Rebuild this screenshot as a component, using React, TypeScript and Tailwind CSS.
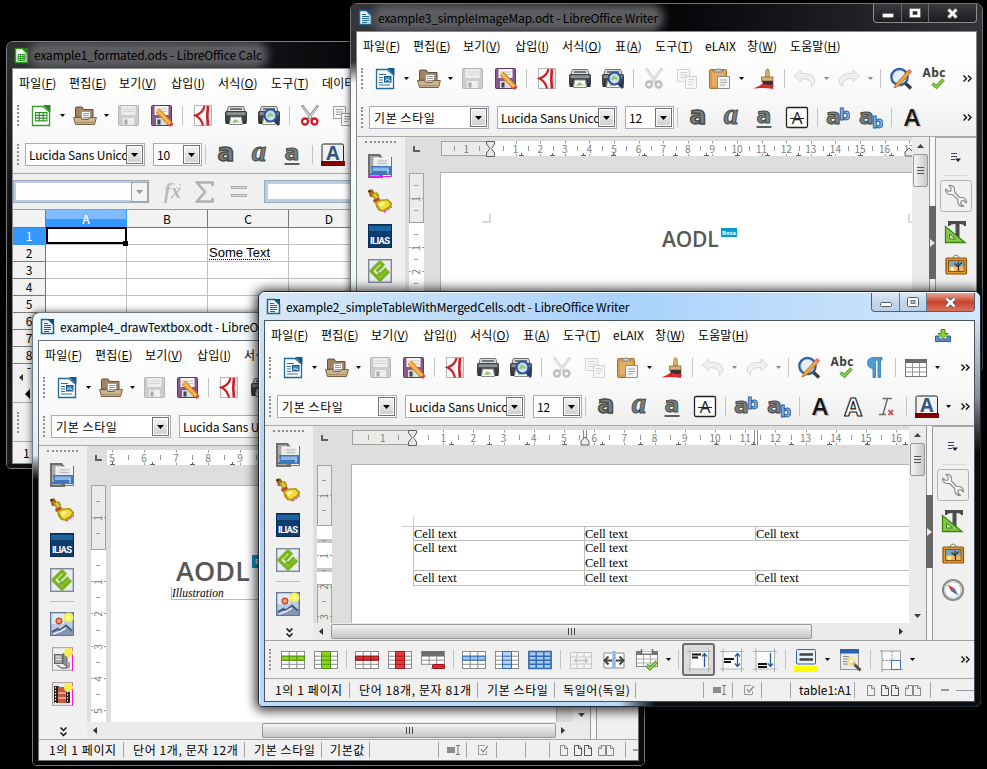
import React from "react";

type Kids = { children?: React.ReactNode };

/* ---------- generic icon shell ---------- */
const I = ({ children, s = 24 }: Kids & { s?: number }) => (
  <svg width={s} height={s} viewBox="0 0 24 24" className="block shrink-0">
    {children}
  </svg>
);

/* ---------- icons: standard toolbar ---------- */
const DocW = () => (
  <I>
    <path d="M3.500 2.500H14L20.500 8V21.500H3.500Z" fill="#fff" stroke="#1c6b9c" strokeWidth="1.3" />
    <path d="M14 1H21.500V8.500Z" fill="#15598a" />
    <path d="M6 7.500H13M6 10.500H10M6 13H10M6 15.500H10M6 18H17" stroke="#2a6f9e" />
    <rect x="11.500" y="9.500" width="6.500" height="5.500" fill="#3b8cc4" stroke="#15598a" />
    <path d="M12 14L14 12L17.500 14" stroke="#cfe6f5" fill="none" />
  </I>
);
const DocC = () => (
  <I>
    <path d="M3.500 2.500H14L20.500 8V21.500H3.500Z" fill="#fff" stroke="#3a9a2e" strokeWidth="1.3" />
    <path d="M14 1H21.500V8.500Z" fill="#1f8a1a" />
    <rect x="6" y="8" width="12.500" height="9.500" fill="#2f9427" />
    <path d="M7 10H17.500M7 12.700H17.500M7 15.400H17.500" stroke="#fff" strokeWidth="1.500" strokeDasharray="2.700 1.200" />
  </I>
);
const Folder = () => (
  <I>
    <path d="M2.500 13V4Q2.500 3 3.500 3H9L11 5.500H20V14Z" fill="#a08560" stroke="#6b4f33" />
    <path d="M8.500 7.500H17.500V15H8.500Z" fill="#fdfdfd" stroke="#999" />
    <path d="M10 9.500H16M10 11.500H16M10 13.500H16" stroke="#999" />
    <path d="M.600 13.500H7.500L9 15.500H15L16.500 13.500H23.400L21.500 20.500H2.500Z" fill="#c8b393" stroke="#7b6040" />
    <path d="M3 18.500H21" stroke="#a68c68" />
  </I>
);
const Floppy = ({ on = false }: { on?: boolean }) => (
  <>
    <rect x="1.500" y="1.500" width="20" height="20" rx="1" fill={on ? "#87598f" : "#cdcdcd"} stroke={on ? "#5e3a66" : "#b5b5b5"} />
    <rect x="4.500" y="2" width="14" height="9" fill={on ? "#f4f4f4" : "#ededed"} />
    <path d="M6 5H17M6 7.500H17" stroke={on ? "#c5c5c5" : "#d5d5d5"} />
    <rect x="6" y="14" width="11" height="7" fill={on ? "#ddd" : "#eee"} />
    <rect x="7.500" y="15.500" width="3" height="5" fill={on ? "#444" : "#aaa"} />
  </>
);
const Save = () => <I><Floppy /></I>;
const Pencil = () => (
  <>
    <path d="M7 6L10 5.500L22 18.500L19 21.500L6.500 9Z" fill="#f6a63c" stroke="#b96a15" strokeWidth=".8" />
    <path d="M8.500 7.500L20.500 20" stroke="#ffd38a" />
    <path d="M19 21.500L22 18.500L23.500 20L21 23Z" fill="#d93c48" />
    <path d="M5.500 4.500L9 5.500L6.500 8.500Z" fill="#f3d9a8" />
  </>
);
const SaveAs = () => <I><Floppy on /><Pencil /></I>;
const Pdf = () => (
  <I>
    <rect x="3.500" y="1.500" width="17" height="20" fill="#fafafa" stroke="#b4b4b4" />
    <rect x="15" y="2" width="5" height="19" fill="#e4e4e4" />
    <path d="M13.500 2Q12 9 4.500 11.500Q10 14 12 21.500" fill="none" stroke="#c9202a" strokeWidth="2.200" />
    <path d="M17 2Q15.500 12 17 21.500" fill="none" stroke="#c9202a" strokeWidth="2.600" />
  </I>
);
const PrinterG = () => (
  <>
    <path d="M4 3.500Q4 2.500 5 2.500H19Q20 2.500 20 3.500L21 8H3Z" fill="#dcdcdc" stroke="#6e6e6e" />
    <path d="M6 5H18" stroke="#555" strokeWidth="1.600" />
    <rect x="1" y="7" width="22" height="11" rx="1.500" fill="#3c4043" />
    <rect x="2.500" y="8.200" width="19" height="3" fill="#8b9093" />
    <rect x="1.500" y="17" width="4" height="3" fill="#303335" />
    <rect x="18.500" y="17" width="4" height="3" fill="#303335" />
    <path d="M6.500 13H17.500L18.500 20.500H5.500Z" fill="#fff" stroke="#888" />
    <path d="M8 19L11 15L16 18Z" fill="#8ccb5e" />
  </>
);
const Printer = () => <I><PrinterG /></I>;
const Preview = () => (
  <I>
    <PrinterG />
    <circle cx="13.500" cy="11.500" r="6" fill="#cfe0ef" fillOpacity=".92" stroke="#2c56a0" strokeWidth="2.200" />
    <path d="M11 13L13 10L16 12" stroke="#8ccb5e" strokeWidth="2" fill="none" />
    <path d="M18 16.500L22 21" stroke="#24386b" strokeWidth="3" />
  </I>
);
const Cut = ({ on = false }: { on?: boolean }) => (
  <I>
    <path d="M4 1.500L14 15M20 1.500L10 15" stroke={on ? "#8f8f8f" : "#d0d0d0"} strokeWidth="2.800" />
    <path d="M4.500 2.500L13 14M19.500 2.500L11 14" stroke={on ? "#efefef" : "#f4f4f4"} />
    <circle cx="7" cy="17.500" r="3" fill="none" stroke={on ? "#d01f2b" : "#bdbdbd"} strokeWidth="2.300" />
    <circle cx="16.500" cy="17.500" r="3" fill="none" stroke={on ? "#d01f2b" : "#bdbdbd"} strokeWidth="2.300" />
  </I>
);
const Copy = ({ on = false }: { on?: boolean }) => (
  <I>
    <g fill="#f7f7f7" stroke={on ? "#999" : "#d3d3d3"}>
      <path d="M2.500 2.500H14.500V14.500H2.500Z" />
      <path d="M5 5.500H12M5 8H12M5 10.500H10" />
      <path d="M10.500 9.500H21.500V21.500H10.500Z" />
      <path d="M13 12.500H19M13 15H19M13 17.500H17" />
    </g>
  </I>
);
const Paste = () => (
  <I>
    <rect x="1.500" y="2.500" width="17" height="19" rx="1" fill="#d99a4b" stroke="#a9702b" />
    <rect x="4" y="5" width="12" height="14" fill="#e4ad66" />
    <path d="M5.500 5V3H8Q10 .500 12 3H14.500V5Z" fill="#ccd0cc" stroke="#80867f" />
    <path d="M9.500 9.500H21.500V21.500H9.500Z" fill="#f6f6f6" stroke="#8d8d8d" />
    <path d="M12 13H19M12 15.500H19M12 18H17" stroke="#a4a4a4" />
  </I>
);
const Brush = () => (
  <I>
    <path d="M1 21.500Q8 19 11 16L21 19L21 22Q12 20.500 1 21.500Z" fill="#e0232d" />
    <path d="M13.500 10L14 3Q15.500 .500 17 3L17.500 10Z" fill="#e3b36c" stroke="#a97430" strokeWidth=".8" />
    <rect x="9.500" y="10" width="11.500" height="4" fill="#d8b27a" stroke="#84653c" strokeWidth=".8" />
    <path d="M10 14H21L21.500 20Q16 21 11 17Z" fill="#3c2f2c" />
    <path d="M12 18Q16 20 21 18.500" stroke="#d8343a" strokeWidth="2" fill="none" />
  </I>
);
const Undo = ({ flip = false }: { flip?: boolean }) => (
  <I>
    <g transform={flip ? "translate(24 0) scale(-1 1)" : undefined}>
      <path d="M1.500 9L8 3V6.500Q20 5.500 22 13Q22.500 17 18.500 19.500Q20 11.500 8 11.500V15Z" fill="#f0f0f0" stroke="#d6d6d6" />
    </g>
  </I>
);
const Find = () => (
  <I>
    <path d="M15 15L22 21.500" stroke="#3c3c3c" strokeWidth="3.500" />
    <circle cx="10.500" cy="10" r="8" fill="#e7eff8" stroke="#2f57a0" strokeWidth="2.600" />
    <circle cx="10.500" cy="10" r="7" fill="none" stroke="#8db2df" strokeWidth=".8" />
    <path d="M5 21L7 17L19 3.500L21.500 6L9.500 19Z" fill="#f5a43a" stroke="#a9601b" strokeWidth=".8" />
    <path d="M18.500 4L20 2L23 4.500L21.500 6.500Z" fill="#ef6b73" />
  </I>
);
const Abc = () => (
  <I>
    <text x="12" y="9.500" textAnchor="middle" textLength="23" fontSize="12" fontWeight="700" fontFamily="Open Sans" fill="#3a3a3a">Abc</text>
    <path d="M10.500 16.500L14.500 20L21.500 12.500" fill="none" stroke="#4f9d22" strokeWidth="3.400" />
    <path d="M10.500 16.500L14.500 20L21.500 12.500" fill="none" stroke="#93d858" strokeWidth="1.400" />
  </I>
);
const Pilcrow = () => (
  <I>
    <path d="M19 1.500H10Q4.500 2 4.500 7Q4.500 12 10 12.500V21.500H12.500V4H15V21.500H17.500V4H19Z" fill="#4c9ed8" stroke="#2b79b5" strokeWidth=".8" />
  </I>
);
const TableI = () => (
  <I>
    <rect x="1.500" y="3.500" width="21" height="17" fill="#fff" stroke="#777" />
    <rect x="1" y="3" width="22" height="4" fill="#6c6c6c" />
    <path d="M1.500 11.500H22M1.500 16H22M8.500 7V20M15.500 7V20" stroke="#999" />
  </I>
);

/* ---------- icons: formatting ---------- */
const chunky = { fontFamily: "DejaVu Sans", fontWeight: 700, fill: "#7c7f7e", stroke: "#474b4a", strokeWidth: 1 };
const Bold = () => <I><text x="12" y="18" textAnchor="middle" fontSize="25" {...chunky} strokeWidth="1.500">a</text></I>;
const Ital = () => <I><text x="12" y="18" textAnchor="middle" fontSize="29" {...chunky} fontStyle="italic" fontFamily="Liberation Serif">a</text></I>;
const Und = () => (
  <I>
    <text x="12" y="17" textAnchor="middle" fontSize="22" {...chunky}>a</text>
    <path d="M4.500 21H19.500" stroke="#5b5f5e" strokeWidth="2" />
  </I>
);
const Strike = () => (
  <I>
    <rect x="1.500" y="1.500" width="21" height="20" rx="1.500" fill="#fff" stroke="#222" strokeWidth="1.300" />
    <text x="12" y="17.500" textAnchor="middle" fontSize="17" fontFamily="Open Sans" fill="#222">A</text>
    <path d="M5 12.500H19" stroke="#222" />
  </I>
);
const Sup = ({ sub = false }: { sub?: boolean }) => (
  <I>
    <text x="7.500" y="18" textAnchor="middle" fontSize="22" {...chunky}>a</text>
    <text x="18.800" y={sub ? 22 : 14} textAnchor="middle" fontSize="16" fontWeight="700" fontFamily="DejaVu Sans" fill="#8ab4e0" stroke="#2f62a5" strokeWidth="1">b</text>
  </I>
);
const Shadow = () => (
  <I>
    <text x="13.500" y="21" textAnchor="middle" fontSize="24" fontWeight="600" fontFamily="Open Sans" fill="#bdbdbd">A</text>
    <text x="12" y="20" textAnchor="middle" fontSize="24" fontWeight="600" fontFamily="Open Sans" fill="#161616">A</text>
  </I>
);
const Outline = () => <I><text x="12" y="20.500" textAnchor="middle" fontSize="25" fontWeight="700" fontFamily="Open Sans" fill="#fff" stroke="#222" strokeWidth="1.200">A</text></I>;
const ClearFmt = () => (
  <I>
    <path d="M8.500 3.500H18M5 19.500H12M13.500 3.500L9 19.500" stroke="#6d6d6d" strokeWidth="1.500" fill="none" />
    <path d="M14.500 15L19 20M19 15L14.500 20" stroke="#dc3b45" strokeWidth="1.800" />
  </I>
);
const FontCol = () => (
  <I>
    <rect x="1" y="1" width="21.500" height="19" rx="1.500" fill="#f1f1f1" stroke="#222" />
    <text x="11.700" y="16.500" textAnchor="middle" fontSize="19" fontWeight="700" fontFamily="Open Sans" fill="#35567f">A</text>
    <rect x="0" y="18" width="24" height="5" fill="#800000" />
  </I>
);

/* ---------- icons: table toolbar ---------- */
const Grid = ({ x = 0, row, col, all, c = "#8fd61b", e = "#4f8f0b", children }: Kids & { x?: number; row?: boolean; col?: boolean; all?: boolean; c?: string; e?: string }) => (
  <I>
    <rect x={.5 + x} y="3.500" width="23" height="17" fill="#fff" stroke="#8a8a8a" />
    <path d="M1 8.200H23M1 12.200H23M1 16.300H23M8.200 4V20M15.800 4V20" stroke="#8a8a8a" />
    {row && <path d="M.500 8.200H23.500V12.200H.500ZM8.200 8V12M15.800 8V12" fill={c} stroke={e} />}
    {col && <path d="M7.500 3.500H16.500V20.500H7.500ZM7.500 8.200H16.500M7.500 12.200H16.500M7.500 16.300H16.500" fill={c} stroke={e} />}
    {all && <path d="M1 3.500H23V20.500H1ZM1 8.200H23M1 12.200H23M1 16.300H23M8.200 4V20M15.800 4V20" fill={c} stroke={e} strokeWidth="1.400" />}
    {children}
  </I>
);
const DelTable = () => (
  <Grid>
    <rect x="1" y="3" width="22" height="5" fill="#6d6d6d" />
    <rect x="0" y="17" width="10" height="6" fill="#efefef" />
    <rect x="11.500" y="16.500" width="12" height="4" rx="1" fill="#e0262d" stroke="#a01015" />
  </Grid>
);
const Merge = () => (
  <I>
    <path d="M1.500 4.500H22.500V20.500H1.500ZM1.500 9H22.500M1.500 16H22.500M8 4V9M15 4V9M8 16V20M15 16V20" fill="#f4f4f4" stroke="#c6c6c6" />
    <path d="M5 12.500H19M8 10.500L5.500 12.500L8 14.500M16 10.500L18.500 12.500L16 14.500" fill="none" stroke="#c0c0c0" strokeWidth="1.500" />
  </I>
);
const Split = () => (
  <I>
    <path d="M2 5H22V20H2Z" fill="#fff" stroke="#8a8a8a" />
    <rect x="10" y="3" width="4" height="18" fill="#a9c6ea" />
    <path d="M12 3V21" stroke="#6f97cb" strokeDasharray="2 1" />
    <path d="M3 12.500H10M21 12.500H14M6.500 8.500L2.500 12.500L6.500 16.500M17.500 8.500L21.500 12.500L17.500 16.500" fill="none" stroke="#444" strokeWidth="2" />
  </I>
);
const Optimize = () => (
  <I>
    <rect x="1.500" y="3.500" width="21" height="15" fill="#fff" stroke="#888" />
    <path d="M1 3H23V7H1Z" fill="#777" />
    <path d="M7 4.500H17" stroke="#fff" strokeWidth="2" />
    <path d="M6.500 1V7M17.500 1V7" stroke="#666" strokeWidth="1.500" />
    <path d="M2 11H22M2 15H22M8.500 7V18M15.500 7V18" stroke="#aaa" />
    <path d="M11.500 17L15 20.500L22 13.500" fill="none" stroke="#4f9d22" strokeWidth="3.600" />
    <path d="M11.500 17L15 20.500L22 13.500" fill="none" stroke="#98dc5c" strokeWidth="1.500" />
  </I>
);
const VAlign = ({ k }: { k: "t" | "m" | "b" }) => (
  <I>
    <rect x="3" y="3" width="18" height="18" fill="#fbfbfb" />
    <path d="M0 3.500H24M0 21H24M3 .500V24M21.500 .500V24" stroke="#b0b0b0" />
    {k === "t" && <path d="M5 6.500H14M5 9.500H11" stroke="#111" strokeWidth="2" />}
    {k === "m" && <path d="M4 11H14M4 14H11" stroke="#111" strokeWidth="2" />}
    {k === "b" && <path d="M5 16H14M5 19H14" stroke="#111" strokeWidth="2" />}
    <path d={k === "t" ? "M17.500 6V19M15 8.500L17.500 5.500L20 8.500" : k === "m" ? "M17.500 6V18M15 8.500L17.500 5.500L20 8.500M15 15.500L17.500 18.500L20 15.500" : "M17.500 5V18M15 15.500L17.500 18.500L20 15.500"} fill="none" stroke="#2c5a94" strokeWidth="1.300" />
  </I>
);
const LineFmt = () => (
  <I>
    <rect x="2.500" y="1.500" width="19" height="14.500" rx="1" fill="#e8f0fa" stroke="#2c64ae" />
    <path d="M5.500 6.500H19M5.500 11.500H19" stroke="#444" strokeWidth="2.400" />
    <rect x="0" y="18" width="24" height="6" fill="#ff0" />
  </I>
);
const AutoFmt = () => (
  <I>
    <rect x="2.500" y="1.500" width="18" height="20" fill="#e9eaec" stroke="#8f949b" />
    <rect x="2" y="1" width="19" height="4.500" fill="#2a61a8" />
    <path d="M5 8.500H11M5 11H11M5 13.500H11M5 16H10" stroke="#888" />
    <path d="M14 14L22.500 22.500" stroke="#54514c" strokeWidth="3" />
    <circle cx="13.500" cy="13.500" r="4.500" fill="#ffe36b" fillOpacity=".75" />
    <circle cx="13.500" cy="13.500" r="1.800" fill="#fff" />
  </I>
);
const Borders = () => (
  <I>
    <rect x="3" y="3" width="18.500" height="18.500" fill="#f7f7f7" stroke="#9c9c9c" />
    <path d="M3 12.500H13V3" stroke="#888" strokeDasharray="2 1.500" fill="none" />
    <path d="M12.500 12.500H21.500V21.500H12.500Z" fill="#fff" stroke="#3a6fb5" />
    <path d="M3 21.500V24M21.500 21.500H24M1 3H3" stroke="#9c9c9c" />
  </I>
);

/* ---------- icons: docks ---------- */
const DockDoc = () => (
  <I>
    <path d="M0 0H12L14 3H15V24H0Z" fill="#6e6e6e" />
    <path d="M2 2H11V22H2Z" fill="#a9a9a9" />
    <path d="M6 4H22V13H6Z" fill="#e9e9e9" stroke="#fff" />
    <path d="M10 7H19M10 9.500H19" stroke="#b9b9b9" />
    <path d="M23.500 3V22.500H1" stroke="#f310f3" fill="none" />
    <path d="M3 12H23V21H1V19H4Z" fill="#3f77bd" />
    <path d="M5 13.500H21V17H5Z" fill="#8fb5e6" />
    <path d="M20 20V16" stroke="#dfeaf8" />
  </I>
);
const Broom = () => (
  <I>
    <path d="M0 2L4 0L7 4L6 8L2 8Z" fill="#a8651a" />
    <path d="M3 5L9 3L11 6L11 10L7 12Z" fill="#b3a01f" />
    <path d="M6 5L9 9" stroke="#e8da5a" strokeWidth="1.500" />
    <path d="M5 11L11 8.500L12 11L6 14Z" fill="#c43d28" />
    <path d="M7 13L12 10.500L20 10L24 14L23 18L16 23L11 22L8 18Z" fill="#b09a12" />
    <path d="M9 14L13 12L19 11.500L22 14.500L21 17L15 21L12 20Z" fill="#f0dc3c" />
    <path d="M11 15Q14 12 17 14L13 18Z" fill="#fdf6a0" />
    <path d="M16 23.500L24 18V14" stroke="#f310f3" fill="none" strokeDasharray="3 1" />
    <circle cx="1.500" cy="2" r="1.200" fill="#3a2208" />
  </I>
);
const Ilias = () => (
  <I>
    <rect width="24" height="24" fill="#0c3d6d" />
    <rect x="1" y="2" width="22" height="5" fill="#1f639c" />
    <path d="M.500 0V24M23.500 0V24M0 .500H24M0 23.500H24" stroke="#0a2b50" />
    <text x="12" y="19.500" textAnchor="middle" textLength="20" fontSize="9.500" fontWeight="700" fontFamily="Roboto" fill="#fff">ILIAS</text>
  </I>
);
const Epub = () => (
  <I>
    <rect x=".7" y=".7" width="22.600" height="22.600" fill="#e9ecf1" stroke="#7b879a" strokeWidth="1.400" />
    <path d="M16 7L12 3L3 12L12 21L21 12M8.500 12.500L14.500 6.500M10 14L12 16L18.500 9.500" fill="none" stroke="#7ab51d" strokeWidth="3.200" strokeLinejoin="round" />
  </I>
);
const Gallery = () => (
  <I>
    <rect x=".7" y=".7" width="22.600" height="22.600" fill="#b9cbe6" stroke="#63758f" strokeWidth="1.400" />
    <path d="M1.500 1.500H14V12H1.500Z" fill="#dfe8f5" />
    <circle cx="9" cy="9" r="2.800" fill="#f3a36b" stroke="#cd4a1e" strokeWidth="1.400" />
    <path d="M1 20L8 15L11 18L16 12L23 18V23H1Z" fill="#8296b4" />
    <path d="M2 20L7 17L10 18L16 13.500L22 19" fill="none" stroke="#3d506f" strokeWidth="1.500" />
    <path d="M3 22L10 19.500L16 16" fill="none" stroke="#e3ebf6" strokeWidth="1.500" />
    <circle cx="18.500" cy="5.500" r="5" fill="#fbf052" />
    <circle cx="18.500" cy="5.500" r="2" fill="#fffbc0" />
  </I>
);
const Sound = () => (
  <I>
    <rect x="2.500" y=".7" width="20" height="22.600" fill="#f0f0f0" stroke="#9b9b9b" />
    <rect x="4.500" y="7.500" width="8" height="9" fill="#a7a7a7" stroke="#666" />
    <path d="M6 10H11M6 12.500H11" stroke="#eee" />
    <path d="M13 7L17 4V20L13 16.500Z" fill="#8f8f8f" stroke="#666" />
    <path d="M7 18Q12 23 19 20V15" stroke="#888" fill="none" strokeWidth="1.500" />
    <path d="M22.500 2V23.500" stroke="#f310f3" />
    <circle cx="18.500" cy="5.500" r="4.600" fill="#f8ee52" />
  </I>
);
const Film = () => (
  <I>
    <rect x="2.500" y=".7" width="20" height="22.600" fill="#f0f0f0" stroke="#9b9b9b" />
    <rect x="4" y="4" width="5" height="17" fill="#31211c" />
    <rect x="15" y="8" width="5" height="13" fill="#31211c" />
    <rect x="8" y="5" width="8" height="16" fill="#c25a41" />
    <path d="M8 11H16M8 16H16" stroke="#f3b7a2" strokeWidth="1.500" />
    <path d="M5.500 5V21M17.500 9V21" stroke="#fff" strokeDasharray="1.500 1.500" />
    <path d="M22.500 2V23.500" stroke="#f310f3" />
    <circle cx="18.500" cy="5.500" r="4.600" fill="#f8ee52" />
  </I>
);
const Wrench = () => (
  <I>
    <path d="M5 1.500Q9.500 1 10.500 5V8L15.500 13.500H18.500Q22.500 14.500 22.500 19L19.500 16.500L17 17L16.800 19.500L19.500 22.500Q15 22.500 13.800 18.500V15.500L8.500 10.500H5.500Q1.500 9.500 1.500 5L4.500 7.500L7 7V4Z" fill="#f8f8f8" stroke="#8e8e8e" strokeWidth="1.200" strokeLinejoin="round" />
  </I>
);
const TStyle = () => (
  <I>
    <path d="M4 1H22V6H20Q20 4 15.500 4V17Q15.500 19 18 19V20H9V19Q11.500 19 11.500 17V4Q6 4 6 6H4Z" fill="#4a4d4c" />
    <path d="M1.500 6.500V22.500H21Z" fill="#86c94b" stroke="#3b8413" strokeWidth="1.300" />
    <path d="M5.500 14V19H11.500Z" fill="#d6efc0" stroke="#3b8413" />
  </I>
);
const Picture = () => (
  <I>
    <path d="M8.500 5Q12 -1 15.500 5" fill="none" stroke="#7c7c7c" />
    <rect x="2" y="5" width="20.500" height="16" rx="1" fill="#e49a2c" stroke="#8a520e" strokeWidth="1.200" />
    <rect x="4.500" y="7.500" width="15.500" height="11" fill="#77a6c9" stroke="#8a520e" />
    <rect x="5" y="13.500" width="14.500" height="4.500" fill="#f3b65b" />
    <path d="M14.500 18V12M14.500 14L10.500 10.500M14.500 12.500L18 9.500M13.500 11.500L14.500 9" stroke="#3d2c1c" strokeWidth="1.200" />
    <circle cx="8.500" cy="16" r="2" fill="#fff3a0" />
  </I>
);
const Compass = () => (
  <I>
    <circle cx="12" cy="12" r="10" fill="#fcfcfc" stroke="#8a8a8a" strokeWidth="2.200" />
    <circle cx="12" cy="12" r="8" fill="none" stroke="#bbb" strokeWidth=".8" />
    <path d="M6.500 6.500L13.500 10.500L10.500 13.500Z" fill="#d63440" />
    <path d="M17.500 17.500L13.500 10.500L10.500 13.500Z" fill="#3f6db3" />
  </I>
);
const PanelMenu = () => (
  <svg width="10" height="11" viewBox="0 0 10 11" className="block">
    <path d="M0 1.500H6M0 4.500H6M0 7.500H4" stroke="#39405a" />
    <path d="M4 6.500H10L7 10Z" fill="#1c2338" />
  </svg>
);

/* ---------- toolbar cells ---------- */
const Tl = ({ children }: Kids) => <div className="flex w-[33px] shrink-0 items-center justify-center">{children}</div>;
const Ar = ({ off = false }: { off?: boolean }) => (
  <div className="flex w-[11px] shrink-0 items-center justify-center">
    <svg width="5" height="3" className="block"><path d="M0 0H5L2.500 3Z" fill={off ? "#888" : "#000"} /></svg>
  </div>
);
const Sp = () => <div className="flex w-2 shrink-0 justify-center"><div className="h-[19px] w-px bg-[#c3c3c3]" /></div>;
const Handle = () => <div className="ml-[4px] mr-[5px] h-[21px] w-[2px] shrink-0 border-l-2 border-dotted border-[#8f8f8f]" />;
const More = () => <svg width="9" height="7" className="mr-1 ml-auto block shrink-0"><path d="M.500 .500L3.500 3.500L.500 6.500M5 .500L8 3.500L5 6.500" fill="none" stroke="#111" strokeWidth="1.400" /></svg>;
const Down = () => <svg width="7" height="10" className="mx-auto block"><path d="M.500 .500L3.500 3.500L6.500 .500M.500 5.500L3.500 8.500L6.500 5.500" fill="none" stroke="#111" strokeWidth="1.500" /></svg>;

const Combo = ({ w, children, tight }: { w: string; tight?: boolean } & Kids) => (
  <div className={`flex h-[23px] shrink-0 items-center overflow-hidden border border-[#a9abb5] bg-white p-px ${w}`}>
    <span className={`w-0 flex-1 overflow-hidden whitespace-nowrap text-[12px] leading-[18px] text-black ${tight ? "pl-[2px] tracking-[-0.15px]" : "pl-[3px] tracking-[0.6px]"}`}>{children}</span>
    <span className="flex h-[19px] w-[17px] shrink-0 items-center justify-center border border-[#707070] bg-gradient-to-b from-[#f4f4f4] to-[#cfcfcf] shadow-[inset_0_0_0_1px_#fff]">
      <svg width="7" height="4" className="block"><path d="M0 0H7L3.500 4Z" fill="#000" /></svg>
    </span>
  </div>
);

type MI = [string, string, string];
const menus: MI[] = [
  ["파일", "F", "w-[50px]"], ["편집", "E", "w-[50px]"], ["보기", "V", "w-[52px]"], ["삽입", "I", "w-[47px]"], ["서식", "O", "w-[53px]"],
  ["표", "A", "w-[40px]"], ["도구", "T", "w-[50px]"], ["eLAIX", "", "w-[42px]"], ["창", "W", "w-[43px]"], ["도움말", "H", "w-[60px]"],
];
const calcMenus: MI[] = [...menus.slice(0, 5), ["도구", "T", "w-[51px]"], ["데이터", "D", "w-[60px]"]];
const Menu = ({ items, children }: { items: MI[] } & Kids) => (
  <div className="flex h-[28px] items-center overflow-hidden bg-gradient-to-b from-white to-[#fdfdfd] pl-[6px]">
    {items.map(([t, k, w]) => (
      <span key={t} className={`shrink-0 whitespace-nowrap text-[12px] text-black ${k ? "tracking-[0.1px]" : "tracking-[0px]"} ${w}`}>
        {t}{k && <>(<u className="underline-offset-1">{k}</u>)</>}
      </span>
    ))}
    {children}
  </div>
);

const Std = ({ calc, full }: { calc?: boolean; full?: boolean }) => (
  <div className="flex h-[37px] items-center overflow-hidden bg-gradient-to-b from-[#fdfdfd] to-[#f9f9f9]">
    <Handle />
    <Tl>{calc ? <DocC /> : <DocW />}</Tl><Ar /><Tl><Folder /></Tl><Ar /><Tl><Save /></Tl><Tl><SaveAs /></Tl><Sp />
    <Tl><Pdf /></Tl><Tl><Printer /></Tl><Tl><Preview /></Tl><Sp />
    <Tl><Cut on={calc} /></Tl><Tl><Copy on={calc} /></Tl><Tl><Paste /></Tl><Ar /><Tl><Brush /></Tl><Sp />
    <Tl><Undo /></Tl><Ar off /><Tl><Undo flip /></Tl><Ar off /><Sp />
    <Tl><Find /></Tl><Tl><Abc /></Tl>
    {full && <><Tl><Pilcrow /></Tl><Sp /><Tl><TableI /></Tl><Ar /></>}
    <More />
  </div>
);
const Fmt = ({ calc, full }: { calc?: boolean; full?: boolean }) => (
  <div className="flex h-[40px] items-center overflow-hidden border-b border-[#a8a8a8] bg-gradient-to-b from-[#f9f9f9] to-[#efefef] pt-[2px]">
    <Handle />
    <div className="ml-px flex gap-2">
      {!calc && <Combo w="w-[120px]">기본 스타일</Combo>}
      <Combo w="w-[120px]" tight>Lucida Sans Unicode</Combo>
      <Combo w="w-[49px]" tight>{calc ? "10" : "12"}</Combo>
    </div>
    <div className="-ml-px flex"><Sp /></div>
    <Tl><Bold /></Tl><Tl><Ital /></Tl><Tl><Und /></Tl>
    {calc ? <><Sp /><Tl><FontCol /></Tl></> : (
      <>
        <Tl><Strike /></Tl><Sp /><Tl><Sup /></Tl><Tl><Sup sub /></Tl><Sp /><Tl><Shadow /></Tl>
        {full && <><Tl><Outline /></Tl><Tl><ClearFmt /></Tl><Sp /><Tl><FontCol /></Tl><Ar /></>}
        <More />
      </>
    )}
  </div>
);

/* ---------- rulers ---------- */
const range = (a: number, b: number) => Array.from({ length: Math.max(0, b - a + 1) }, (_, i) => a + i);

const HRuler = ({ w, zero, pitch, from, to, tab, tab0, edge, marks = [] }: { w: number; zero: number; pitch: number; from: number; to: number; tab: number; tab0: number; edge?: number; marks?: number[] }) => (
  <svg width={w} height="16" className="block">
    <rect width={w} height="15" fill="#fff" />
    {zero > 0 && <rect x=".5" y=".5" width={zero - 1} height="14" fill="#ebebea" stroke="#a3a3a3" />}
    {zero > 0 && <text x={zero - pitch} y="11.500" textAnchor="middle" fontSize="10" fill="#7d7d7d">1</text>}
    {zero > 0 && [0.5, 1.5].map((n) => <path key={n} d={`M${Math.round(zero - pitch * n) + .5} 5V10`} stroke="#999" />)}
    {range(from, to).map((n) => (
      <g key={n}>
        <text x={zero + pitch * n} y="11.500" textAnchor="middle" fontSize="10" fill="#7d7d7d">{n}</text>
        <path d={`M${Math.round(zero + pitch * n) + .5} 0V2.500M${Math.round(zero + pitch * n) + .5} 13V15`} stroke="#999" />
        <path d={`M${Math.round(zero + pitch * (n - .5)) + .5} 5V10`} stroke="#999" />
      </g>
    ))}
    {range(0, 30).map((n) => tab0 + n * tab).filter((x) => x < w - 4).map((x) => (
      <path key={x} d={`M${Math.round(x) + .5} 12V15M${Math.round(x) - 2} 14.500H${Math.round(x) + 3}`} stroke="#666" />
    ))}
    {marks.map((m) => (
      <path key={m} d={`M${m - 1.5} 0V15M${m + 1.5} 0V15`} stroke="#8a8a8a" fill="none" />
    ))}
    {zero > 0 && <path d={`M${zero - 4.500} .500H${zero + 3.500}V3L${zero + .5} 7.500L${zero + 3.500} 12V15.500H${zero - 4.500}V12L${zero - 1} 7.500L${zero - 4.500} 3Z`} fill="#e9e9e9" stroke="#606060" />}
    {edge && <path d={`M${edge - 4} 15V11L${edge} 7L${edge + 4} 11V15Z`} fill="#e9e9e9" stroke="#606060" />}
  </svg>
);
const VRuler = ({ h, zero, pitch, to, marks = [], gray }: { h: number; zero: number; pitch: number; to: number; marks?: number[]; gray?: number }) => (
  <svg width="15" height={h} className="block shrink-0">
    <rect width="15" height={h} fill="#fff" />
    <rect x=".5" y=".5" width="14" height={zero - 1} fill="#ebebea" stroke="#a3a3a3" />
    {gray && <rect x=".5" y={gray + .5} width="14" height={h} fill="#ebebea" stroke="#a3a3a3" />}
    {[-1, ...range(1, to)].map((n) => {
      const y = Math.round(zero + pitch * n);
      return (
        <g key={n}>
          <text x={7.500} y={y} transform={`rotate(-90 7.5 ${y})`} dy="3.500" textAnchor="middle" fontSize="10" fill="#7d7d7d">{Math.abs(n)}</text>
          <path d={`M0 ${y - .5}H2M13 ${y - .5}H15`} stroke="#999" />
        </g>
      );
    })}
    {[-1.5, -.5, ...range(0, to).map((n) => n + .5)].map((n) => <path key={n} d={`M5 ${Math.round(zero + pitch * n) - .5}H9`} stroke="#999" />)}
    {marks.map((m) => <path key={m} d={`M0 ${m - 1}H15M0 ${m + 1}H15`} stroke="#8a8a8a" />)}
  </svg>
);
const TabMark = () => <div className="ml-[8px] mt-[5px] h-[6px] w-[7px] shrink-0 border-b-2 border-l-2 border-[#5f5f5f]" />;

/* ---------- docks and scroll bars ---------- */
const LeftDock = ({ extra = [] }: { extra?: React.ReactNode[] }) => (
  <div className="flex w-[48px] shrink-0 flex-col items-center overflow-hidden bg-[#f0f0f0] pt-[4px] pr-[2px]">
    <div className="mb-[11px] h-[2px] w-[31px] shrink-0 border-t-2 border-dotted border-[#8f8f8f]" />
    <div className="flex flex-col gap-[11px]"><DockDoc /><Broom /><Ilias /><Epub /></div>
    {extra.length > 0 && <div className="mt-[9px] mb-[10px] h-px w-6 shrink-0 bg-[#bdbdbd]" />}
    <div className="flex flex-col gap-[11px]">{extra.map((e, i) => <React.Fragment key={i}>{e}</React.Fragment>)}</div>
    {extra.length > 0 && <div className="mt-auto mb-[2px] pl-[2px]"><Down /></div>}
  </div>
);
const VScroll = () => (
  <div className="flex w-[17px] shrink-0 flex-col items-center bg-[#ebebeb] pt-[7px]">
    <svg width="7" height="4" className="block shrink-0"><path d="M0 4H7L3.500 0Z" fill="#444" /></svg>
    <div className="mt-[6px] flex h-[33px] w-[15px] shrink-0 flex-col items-center justify-center gap-[2px] rounded-[2px] border border-[#979797] bg-gradient-to-r from-[#f4f4f4] to-[#c9c9c9]">
      <i className="h-px w-[7px] bg-[#555]" /><i className="h-px w-[7px] bg-[#555]" /><i className="h-px w-[7px] bg-[#555]" />
    </div>
    <svg width="7" height="4" className="mt-auto mb-[22px] block shrink-0"><path d="M0 0H7L3.500 4Z" fill="#444" /></svg>
  </div>
);
const HScroll = ({ pad, thumb, tail }: { pad: string; thumb: string; tail: string }) => (
  <div className="flex h-[17px] shrink-0 items-center bg-[#ebebeb]">
    <div className={`flex shrink-0 justify-start pl-[6px] ${pad}`}><svg width="4" height="7" className="block"><path d="M4 0V7L0 3.500Z" fill="#333" /></svg></div>
    <div className={`flex h-[15px] shrink-0 items-center justify-center gap-[2px] rounded-[2px] border border-[#979797] bg-gradient-to-b from-[#f5f5f5] to-[#c6c6c8] ${thumb}`}>
      <i className="h-[7px] w-px bg-[#444]" /><i className="h-[7px] w-px bg-[#444]" /><i className="h-[7px] w-px bg-[#444]" />
    </div>
    <div className={`flex shrink-0 justify-end ${tail}`}><svg width="4" height="7" className="block"><path d="M0 0V7L4 3.500Z" fill="#333" /></svg></div>
  </div>
);
const RightDock = ({ compass }: { compass?: boolean }) => (
  <div className="flex min-w-0 flex-1">
    <div className="flex w-[7px] shrink-0 flex-col border-x border-[#9a9a9a] bg-[#f7f7f7]">
      <div className="-mx-px mt-[69px] flex h-[73px] items-center justify-center bg-[#676767]">
        <svg width="5" height="8" className="block"><path d="M0 0V8L5 4Z" fill="#e8e8e8" /></svg>
      </div>
    </div>
    <div className="flex flex-1 flex-col items-center border-t border-[#a8a8a8] bg-[#f0f0f0] pr-px">
      <div className="mt-[14px]"><PanelMenu /></div>
      <div className="mt-[12px] h-px w-[23px] bg-[#d8d8d8]" />
      <div className="mt-[4px] flex size-[32px] shrink-0 items-center justify-center rounded-[3px] border border-[#b3b3b3]"><Wrench /></div>
      <div className="mt-[8px]"><TStyle /></div>
      <div className="mt-[9px]"><Picture /></div>
      {compass && <div className="mt-[12px]"><Compass /></div>}
    </div>
  </div>
);

/* ---------- status bar ---------- */
const St = ({ w, children, latin }: { w: string; latin?: boolean } & Kids) => (
  <div className={`flex h-[16px] shrink-0 items-center whitespace-nowrap border-r border-[#a5a5a5] text-[12px] text-black ${latin ? "" : "tracking-[0.6px]"} ${w}`}>{children}</div>
);
const InsI = () => <svg width="13" height="10" className="block shrink-0"><rect y="2" width="8" height="6" fill="#8c8c8c" /><path d="M9 .500H13M9 9.500H13M11 0V10" stroke="#777" /></svg>;
const SigI = () => <svg width="12" height="12" className="block shrink-0"><path d="M8 1.500H1.500V10.500H9.500V7" fill="none" stroke="#9b9b9b" /><path d="M4 5L6 8L11 2" fill="none" stroke="#8b8b8b" strokeWidth="1.300" /></svg>;
const Views = () => (
  <svg width="56" height="11" className="block shrink-0">
    <path d="M1.500 .500H6L8.500 3V10.500H1.500ZM5.500 .500V3.500H8.500" fill="none" stroke="#888" />
    <path d="M15.500 .500H20L22.500 3V10.500H15.500ZM19.500 .500V3.500H22.500M25.500 .500H30L32.500 3V10.500H25.500ZM29.500 .500V3.500H32.500" fill="none" stroke="#555" />
    <path d="M39.500 10.500V3L42 .500H46.500V10.500ZM47.500 .500H52L54.500 3V10.500H47.500ZM39.500 3.500H42.500V.500M51.500 .500V3.500H54.500" fill="none" stroke="#888" />
  </svg>
);

/* ---------- window chrome ---------- */
const AppIcon = ({ calc }: { calc?: boolean }) => (
  <svg width="15" height="17" viewBox="0 0 15 17" className="block shrink-0">
    <path d="M1.500 1.500H8.500L13.500 6.500V15.500H1.500Z" fill={calc ? "#fff" : "#eef6fb"} stroke={calc ? "#2d9a22" : "#1b6490"} strokeWidth="1.500" />
    <path d="M8 1H14V7Z" fill={calc ? "#1e8a17" : "#124f78"} />
    {calc ? <path d="M4 7.500H11V13.500H4ZM4 9.500H11M4 11.500H11M6.500 7.500V13.500M9 7.500V13.500" fill="none" stroke="#2d9a22" /> : <path d="M4 5.500H8M4 7.500H11M4 9.500H11M4 11.500H11M4 13.500H9" stroke="#1b6490" />}
  </svg>
);

type WinProps = { pos: string; frame: string; head: string; left: string; right: string; foot: string; edge: string; title: string; tcls: string; calc?: boolean; buttons?: React.ReactNode } & Kids;
const Win = ({ pos, frame, head, left, right, foot, edge, title, tcls, calc, buttons, children }: WinProps) => (
  <section className={`absolute flex flex-col overflow-hidden rounded-t-[7px] rounded-b-[5px] border ${pos} ${frame}`}>
    <header className={`flex shrink-0 items-center pl-[7px] ${head}`}>
      <AppIcon calc={calc} />
      <span className={`ml-[5px] whitespace-nowrap rounded-full pb-px text-[12px] leading-[15px] ${tcls}`}>{title}</span>
      {buttons}
    </header>
    <div className="flex min-h-0 flex-1">
      <div className={`w-[5px] shrink-0 ${left}`} />
      <div className={`flex min-w-0 flex-1 flex-col overflow-hidden border bg-[#f0f0f0] ${edge}`}>{children}</div>
      <div className={`w-[5px] shrink-0 ${right}`} />
    </div>
    <div className={`h-[4px] shrink-0 ${foot}`} />
  </section>
);
const Btns = ({ dark }: { dark?: boolean }) => (
  <div className={`ml-auto mr-[5px] flex h-[19px] self-start overflow-hidden rounded-b-[4px] border border-t-0 ${dark ? "border-[#8d8d8d] bg-gradient-to-b from-[#3a3b3e] to-[#1c1d20]" : "border-[#4e6072] bg-gradient-to-b from-[#dfeaf7] via-[#c5d5e8] to-[#b9cfe9]"}`}>
    <div className={`flex w-[28px] items-center justify-center border-r ${dark ? "border-[#6b6b6b]" : "border-[#66788c]"}`}>
      <svg width="12" height="5" className="mt-[4px] block"><rect x=".5" y=".5" width="11" height="4" rx="1" fill="#fff" stroke={dark ? "#777" : "#55606c"} /></svg>
    </div>
    <div className={`flex w-[27px] items-center justify-center border-r ${dark ? "border-[#6b6b6b]" : "border-[#66788c]"}`}>
      <svg width="12" height="10" className="block"><rect x=".5" y=".5" width="11" height="9" rx="1" fill="#fff" stroke={dark ? "#777" : "#55606c"} /><rect x="4" y="3.500" width="4" height="3" fill={dark ? "#26272a" : "#a9bdd6"} stroke={dark ? "#555" : "#55606c"} strokeWidth=".8" /></svg>
    </div>
    <div className={`flex w-[47px] items-center justify-center ${dark ? "" : "bg-gradient-to-b from-[#e7a595] via-[#c8432b] to-[#d9725c]"}`}>
      <svg width="13" height="11" className="block"><path d="M2.500 1.500L10.500 9.500M10.500 1.500L2.500 9.500" stroke={dark ? "#555" : "#5c4a55"} strokeWidth="4.500" /><path d="M2.500 1.500L10.500 9.500M10.500 1.500L2.500 9.500" stroke="#fff" strokeWidth="2.600" /></svg>
    </div>
  </div>
);

/* ---------- windows ---------- */
const cols = ["A", "B", "C", "D"];
const CalcWin = () => (
  <Win calc pos="left-[6px] top-[41px] w-[370px] h-[428px]" frame="border-[#7b7f84] bg-[#17181a]" edge="border-[#8a8d90]"
    head="h-[26px] bg-gradient-to-r from-[#303133] via-[#1a1b1d] to-[#050608]" left="bg-gradient-to-b from-[#2a2b2d] via-[#0a0a0a] to-[#1a1a1a]" right="bg-black" foot="bg-[#111]"
    title="example1_formated.ods - LibreOffice Calc" tcls="bg-[#5b5c5f] text-black shadow-[0_0_9px_6px_#5b5c5f] tracking-[-0.14px]">
    <Menu items={calcMenus} />
    <Std calc />
    <Fmt calc />
    <div className="flex h-[36px] shrink-0 items-center border-b border-[#9d9d9d]">
      <div className="flex h-[23px] w-[136px] shrink-0 items-center justify-end border border-[#9fa8b5] bg-white shadow-[inset_0_0_0_2px_#b5d0ee]">
        <span className="flex h-[20px] w-[17px] items-center justify-center border border-[#a5a5a5] bg-[#f4f4f4]"><svg width="7" height="4" className="block"><path d="M0 0H7L3.500 4Z" fill="#999" /></svg></span>
      </div>
      <svg width="22" height="22" viewBox="0 0 22 22" className="ml-[14px] mr-[10px] block shrink-0">
        <text x="1" y="17" fontSize="20" fontWeight="700" fontStyle="italic" fontFamily="Liberation Serif" fill="#b9b9b9" textLength="17">fx</text>
        <path d="M10 4L12 2M12 4L10 2M16 3L18 5M18 3L16 5M13 6.500H15" stroke="#cfcfcf" />
      </svg>
      <svg width="20" height="22" className="block shrink-0"><path d="M17.500 5V1.500H2L10 11L2 20.500H17.500V17" fill="none" stroke="#b1b1b1" strokeWidth="2.600" /></svg>
      <div className="ml-[16px] flex w-[16px] shrink-0 flex-col gap-[5px]"><i className="h-[3px] border border-[#a9a9a9] bg-[#ddd]" /><i className="h-[3px] border border-[#a9a9a9] bg-[#ddd]" /></div>
      <div className="ml-[17px] h-[23px] flex-1 border border-[#9fa8b5] bg-white shadow-[inset_0_0_0_3px_#b5d0ee]" />
    </div>
    <div className="flex h-[159px] shrink-0 flex-col overflow-hidden bg-white text-[12px]">
      <div className="flex h-[18px] shrink-0 border-b border-[#777] bg-[#f2f2f2]">
        <div className="w-[33px] shrink-0 border-r border-[#777]" />
        {cols.map((c, i) => (
          <div key={c} className={`flex w-[81px] shrink-0 items-center justify-center border-r ${i === 0 ? "border-[#3399ff] bg-gradient-to-b from-[#7fbcff] from-50% to-[#3399ff] to-50% font-medium text-white" : "border-[#777] text-black"}`}>{c}</div>
        ))}
      </div>
      {range(1, 9).map((r) => (
        <div key={r} className="flex h-[17px] shrink-0">
          <div className={`flex w-[33px] shrink-0 items-center justify-center border-b border-r leading-none ${r === 1 ? "border-[#3399ff] bg-[#3399ff] text-white" : "border-[#777] bg-[#f2f2f2] text-black"}`}>{r}</div>
          {cols.map((c) => (
            <div key={c} className="w-[81px] shrink-0 border-b border-r border-[#c0c0c0]">
              {r === 1 && c === "A" && <div className="relative -mt-px h-[17px] w-[81px] border-2 border-black"><i className="absolute -bottom-[4px] -right-[3px] size-[5px] bg-black" /></div>}
              {r === 2 && c === "C" && <span className="ml-px inline-block h-[15px] border-b border-dotted border-black align-top font-['Liberation_Sans',sans-serif] text-[13px] leading-[16px] text-black">Some Text</span>}
            </div>
          ))}
        </div>
      ))}
    </div>
    <div className="flex h-[16px] shrink-0 items-center pl-[6px]"><svg width="4" height="7" className="block"><path d="M4 0V7L0 3.500Z" fill="#333" /></svg><div className="ml-[8px] h-[14px] w-[200px] bg-[#ddd]" /></div>
    <div className="flex h-[18px] shrink-0 items-center border-b border-[#a8a8a8] pl-[12px]"><svg width="5" height="10" className="block"><path d="M5 0V10L0 5Z" fill="#000" /></svg></div>
    <div className="flex h-[39px] shrink-0 items-center border-b border-[#a8a8a8]"><Handle /></div>
    <div className="flex flex-1 items-center pl-[10px] text-[12px]">1 / 1</div>
  </Win>
);

const Logo = ({ size, badge }: { size: string; badge: string }) => (
  <div className="flex items-start font-['Open_Sans',sans-serif] font-semibold text-[#575757]">
    <span className={size}>AODL</span>
    <span className={`flex items-center justify-center bg-[#0a98cd] font-bold text-white ${badge}`}>Beta</span>
  </div>
);

const Win3 = () => (
  <Win pos="left-[350px] top-[3px] w-[633px] h-[370px]" frame="border-[#6f7276] bg-black shadow-[0_0_6px_1px_rgba(0,0,0,.6)]" edge="border-[#85888b] border-b-[#444]"
    head="h-[27px] bg-gradient-to-r from-[#35373a] via-[#050608] to-[#33353a]" left="bg-gradient-to-b from-[#2f3133] from-[30px] via-[#f4fbfc] via-[52px] to-[#eef9fa]" right="bg-gradient-to-b from-[#303236] via-[#1d1f22] to-[#050505]" foot="bg-[#222]"
    title="example3_simpleImageMap.odt - LibreOffice Writer" tcls="bg-[#5b5c5f] text-black shadow-[0_0_9px_6px_#5b5c5f] tracking-[-0.14px]" buttons={<Btns dark />}>
    <Menu items={menus} />
    <Std />
    <Fmt />
    <div className="flex min-h-0 flex-1">
      <LeftDock />
      <div className="flex w-[507px] shrink-0 flex-col overflow-hidden bg-[#dededc] pt-[4px]">
        <div className="flex h-[31px] shrink-0"><TabMark /><div className="ml-[21px]"><HRuler w={471} zero={50} pitch={24.6} from={1} to={17} tab={30.8} tab0={80} edge={468} /></div></div>
        <div className="flex min-h-0 flex-1">
          <div className="ml-[4px] mr-[16px] mt-px w-[15px]"><VRuler h={220} zero={50} pitch={24.5} to={6} /></div>
          <div className="flex flex-1 flex-col border-l border-t border-[#b3b3b3] bg-white">
            <div className="flex justify-between pl-[41px] pt-[41px]">
              <div className="size-[9px] border-b-2 border-r-2 border-[#dadada]" />
              <div className="h-[9px] w-[4px] border-b-2 border-l-2 border-[#dadada]" />
            </div>
            <div className="pl-[221px] pt-[2px]"><Logo size="w-[56px] text-[21px] leading-[28px] tracking-[-0.2px]" badge="ml-[3px] mt-[3px] h-[9px] w-[16px] text-[6px] leading-none" /></div>
          </div>
        </div>
      </div>
      <VScroll />
      <RightDock />
    </div>
  </Win>
);

const Win4 = () => (
  <Win pos="left-[32px] top-[312px] w-[613px] h-[454px]" frame="border-[#77797c] bg-black shadow-[0_0_6px_1px_rgba(0,0,0,.5)]" edge="border-[#6d7073]"
    head="h-[27px] bg-gradient-to-r from-[#eef7fb] to-[#ffffff]" left="bg-gradient-to-b from-[#e9f6fa] from-[60px] via-[#dfeaf0] via-[115px] to-[#08090b] to-[140px]" right="bg-[#0a0b0d]" foot="bg-[#050505]"
    title="example4_drawTextbox.odt - LibreOffice Writer" tcls="text-black tracking-[-0.1px]">
    <Menu items={menus} />
    <Std />
    <Fmt />
    <div className="flex min-h-0 flex-1">
      <LeftDock extra={[<Gallery />, <Sound />, <Film />]} />
      <div className="flex w-[486px] shrink-0 flex-col">
        <div className="flex min-h-0 flex-1 flex-col overflow-hidden bg-[#dededc] pt-[4px]">
          <div className="flex h-[35px] shrink-0"><TabMark /><div className="ml-[5px]"><HRuler w={466} zero={-155} pitch={32} from={5} to={19} tab={40} tab0={5} /></div></div>
          <div className="flex min-h-0 flex-1">
            <div className="ml-[4px] mr-[5px] w-[15px]"><VRuler h={240} zero={65} pitch={32.2} to={6} /></div>
            <div className="mr-[16px] flex-1 border-t border-r border-[#b3b3b3] bg-white">
              <div className="pl-[65px] pt-[67px]"><Logo size="w-[73px] text-[27px] leading-[36px] tracking-[0.1px]" badge="ml-[3px] mt-[2px] h-[13px] w-[22px] text-[7px] leading-none" /></div>
              <div className="-mt-[2px] ml-[60px] h-[13px] w-[200px] border-b border-l border-[#bbb] font-['Liberation_Serif',serif] text-[11.5px] italic leading-[13px] text-black">Illustration</div>
            </div>
          </div>
        </div>
        <HScroll pad="w-[175px]" thumb="w-[294px]" tail="w-[9px]" />
      </div>
      <VScroll />
      <RightDock />
    </div>
    <div className="flex h-[21px] shrink-0 items-center border-t border-[#a8a8a8] pl-[10px]">
      <St w="w-[75px]">1의 1 페이지</St><St w="w-[121px] pl-[9px]">단어 1개, 문자 12개</St><St w="w-[77px] pl-[9px]">기본 스타일</St><St w="w-[48px] pl-[8px]">기본값</St>
      <St w="w-[69px]" /><St w="w-[28px] pl-[8px]"><InsI /></St><St w="w-[30px] pl-[10px]"><SigI /></St><St w="w-[29px]" /><St w="w-[24px]" />
      <St w="w-[76px] pl-[9px]"><Views /></St><i className="ml-[7px] h-[2px] w-[7px] bg-[#999]" />
    </div>
  </Win>
);

const cell = "border-[#bdbdbd] font-['Liberation_Serif',serif] text-[12.5px] text-black";
const Win2 = () => (
  <Win pos="left-[258px] top-[291px] w-[723px] h-[416px]" frame="border-[#22282e] bg-[#b9d7f7] shadow-[0_1px_11px_3px_rgba(0,0,0,.75)]" edge="border-[#45525f]"
    head="h-[28px] border-t border-white/80 bg-gradient-to-r from-[#d8e8f6] via-[#a9d2fb] to-[#d3e7fb]" left="border-l border-white/80 bg-gradient-to-b from-[#cfe1f3] via-[#b0cfec] to-[#b5d8fb]" right="bg-gradient-to-b from-[#cfe2f4] via-[#8a9096] via-20% to-[#090b0f] to-35%" foot="bg-gradient-to-r from-[#b9dafb] from-50% to-[#0c0f14] to-55%"
    title="example2_simpleTableWithMergedCells.odt - LibreOffice Writer" tcls="text-black tracking-[-0.15px]" buttons={<Btns />}>
    <Menu items={menus}>
      <svg width="16" height="13" className="mr-[23px] ml-auto block shrink-0"><path d="M.500 7H4V10H12V7H15.500V12.500H.500Z" fill="#5f92bf" stroke="#2f618f" /><path d="M6 .500H10V4.500H13L8 9.500L3 4.500H6Z" fill="#8fd42b" stroke="#3f8a12" /></svg>
    </Menu>
    <Std full />
    <Fmt full />
    <div className="flex h-[214px] shrink-0">
      <LeftDock extra={[<Gallery />]} />
      <div className="flex w-[596px] shrink-0 flex-col">
        <div className="flex min-h-0 flex-1 flex-col overflow-hidden bg-[#dededc] pt-[4px]">
          <div className="flex h-[34px] shrink-0"><TabMark /><div className="ml-[24px]"><HRuler w={557} zero={61} pitch={30.2} from={1} to={16} tab={37.8} tab0={99} edge={233} marks={[233, 404]} /></div></div>
          <div className="flex min-h-0 flex-1">
            <div className="ml-[4px] mr-[19px] mt-px w-[15px]"><VRuler h={160} zero={61} pitch={30.3} to={3} marks={[76, 105]} gray={119} /></div>
            <div className="flex flex-1 flex-col border-l border-t border-[#b3b3b3] bg-white pt-[51px]">
              <div className="ml-[50px] h-[11px] w-[12px] shrink-0 border-b border-r border-[#d0d0d0]" />
              <div className="-mt-px ml-[61px] grid grid-cols-[170px_171px_1fr] grid-rows-[14px_30px_15px] border-l border-t border-[#bdbdbd]">
                <div className={`border-b leading-[14px] ${cell}`}>Cell text</div>
                <div className={`border-b border-l leading-[14px] ${cell}`}>Cell text</div>
                <div className={`border-b border-l leading-[14px] ${cell}`}>Cell text</div>
                <div className={`border-b leading-[14px] ${cell}`}>Cell text</div>
                <div className={`col-span-2 border-b border-l leading-[15px] ${cell}`}>Cell text<br />Cell text</div>
                <div className={`border-b leading-[14px] ${cell}`}>Cell text</div>
                <div className={`border-b border-l leading-[14px] ${cell}`}>Cell text</div>
                <div className={`border-b border-l leading-[14px] ${cell}`}>Cell text</div>
              </div>
            </div>
          </div>
        </div>
        <HScroll pad="w-[18px]" thumb="w-[481px]" tail="w-[91px]" />
      </div>
      <VScroll />
      <RightDock compass />
    </div>
    <div className="flex h-[38px] shrink-0 items-center overflow-hidden border-t border-[#a0a0a0]">
      <Handle />
      <Tl><Grid row /></Tl><Tl><Grid col /></Tl><Sp />
      <Tl><Grid row c="#e32b30" e="#8f1014" /></Tl><Tl><Grid col c="#e83a3a" e="#a01418" /></Tl><Tl><DelTable /></Tl><Sp />
      <Tl><Grid row c="#9fc3ef" e="#2f68b3" /></Tl><Tl><Grid col c="#b9d4f4" e="#2f68b3" /></Tl><Tl><Grid all c="#a9caf2" e="#2f68b3" /></Tl><Sp />
      <Tl><Merge /></Tl><Tl><Split /></Tl><Tl><Optimize /></Tl><Ar /><Sp />
      <div className="flex size-[33px] shrink-0 items-center justify-center rounded-[3px] border-2 border-[#6f6f6f] bg-[#dcdcdc]"><VAlign k="t" /></div>
      <Tl><VAlign k="m" /></Tl><Tl><VAlign k="b" /></Tl><Sp />
      <Tl><LineFmt /></Tl><Ar /><Tl><AutoFmt /></Tl><Sp /><Tl><Borders /></Tl><Ar />
      <More />
    </div>
    <div className="flex flex-1 items-center overflow-hidden border-t border-[#a8a8a8] pl-[10px]">
      <St w="w-[75px]">1의 1 페이지</St><St w="w-[128px] pl-[9px]">단어 18개, 문자 81개</St><St w="w-[77px] pl-[9px]">기본 스타일</St><St w="w-[81px] pl-[8px]">독일어(독일)</St>
      <St w="w-[68px]" /><St w="w-[29px] pl-[9px]"><InsI /></St><St w="w-[29px] pl-[10px]"><SigI /></St><St w="w-[29px]" /><St latin w="w-[64px] pl-[8px]">table1:A1</St>
      <St w="w-[76px] pl-[11px]"><Views /></St><i className="ml-[10px] h-[2px] w-[8px] bg-[#999]" /><i className="ml-[7px] h-px flex-1 bg-[#999]" />
    </div>
  </Win>
);

export default function App() {
  return (
    <main className="relative h-[769px] w-[987px] overflow-hidden bg-black font-['Noto_Sans_CJK_KR',sans-serif]">
      <CalcWin />
      <Win3 />
      <Win4 />
      <Win2 />
    </main>
  );
}
